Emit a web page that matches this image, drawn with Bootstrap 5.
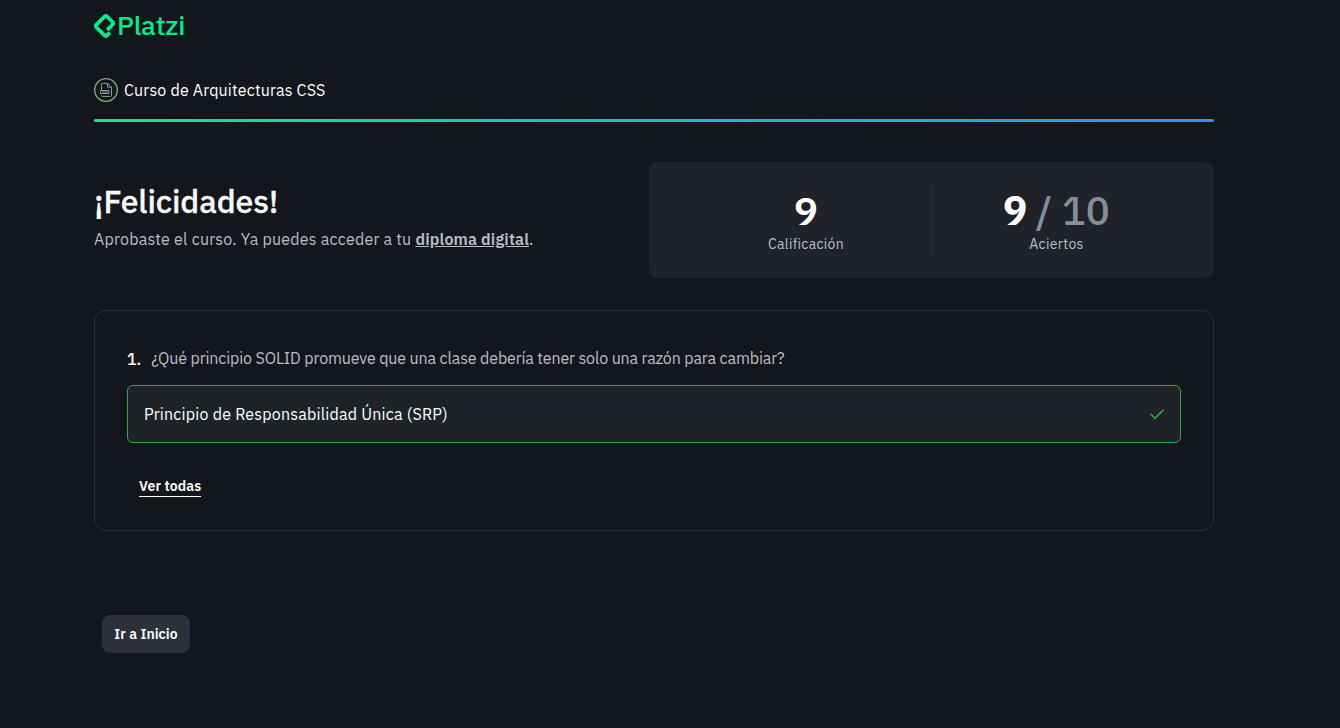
<!DOCTYPE html>
<html lang="es" data-bs-theme="dark">
<head>
<meta charset="utf-8">
<meta name="viewport" content="width=device-width, initial-scale=1">
<title>Platzi</title>
<link href="https://cdn.jsdelivr.net/npm/bootstrap@5.3.0/dist/css/bootstrap.min.css" rel="stylesheet">
<style>
body{background:#13161c;color:#fff;font-family:"IBM Plex Sans",Roboto,"Liberation Sans",sans-serif;font-size:16px;line-height:24px}
.page{width:1120px;margin-left:94px;padding-top:13px}
.brand{height:26px;color:#0ae98a}
.brand-name{font-size:27px;line-height:26px;font-weight:500;letter-spacing:-.25px;margin:-2px 0 0 2px}
.course{margin-top:39px;gap:6px;height:24px}
.course-name{letter-spacing:.17px}
.rule-line{height:3px;margin-top:17px;border-radius:2px;background:linear-gradient(90deg,#0ae98a,#3690f5)}
.summary{margin-top:40px;height:116px}
.congrats{width:555px;padding-top:19px}
.congrats h1{font-size:32px;line-height:40px;font-weight:500;letter-spacing:-.1px;color:#f7f8fa;margin:0;-webkit-text-stroke:.3px currentColor}
.congrats p{color:#babec5;margin:6px 0 0;letter-spacing:.22px}
.congrats a{color:inherit;font-weight:600;letter-spacing:.18px}
.score{background:#1f2229;border-radius:8px;padding:24px 33px 24px 32px}
.score-item{font-size:14px;line-height:20px;color:#babec5;padding-top:2px;letter-spacing:.3px}
.score-num{font-size:40px;line-height:44px;font-weight:600;color:#fff;letter-spacing:0;margin-bottom:2px}
.score-hits{font-weight:700}
.score-total{color:#858d99;font-weight:500;margin-left:-1px}
.score-item + .score-item{border-left:1px solid #2b2f36}
.quiz{margin-top:32px;height:221px;border:1px solid #2b2e35;border-radius:12px;padding:36px 32px 0}
.question{color:#babec5;gap:10px}
.q-num{font-weight:500}
.q-text{letter-spacing:-.13px;margin-top:-1px}
.a-text{letter-spacing:.21px}
.answer{height:58px;margin-top:14px;border:1px solid #33a64c;border-radius:6px;background:#1f2229;padding:0 16px}
.see-all{font-size:14px;line-height:20px;font-weight:600;letter-spacing:.1px;color:#fff;border-bottom:1px solid #fff;margin:33px 0 0 12px}
.home-btn{--bs-btn-bg:#2c3038;--bs-btn-color:#fff;--bs-btn-border-color:#2c3038;width:88px;height:38px;margin:84px 0 0 8px;border-radius:8px;font-size:14px;font-weight:600;letter-spacing:.05px;padding:0}
</style>
</head>
<body>
<main class="page">
  <header class="brand d-flex align-items-center">
    <svg width="21" height="24" viewBox="1.35 0 21.3 24" fill="currentColor"><path d="M10.64 1.127 2.487 9.282a3.842 3.842 0 0 0 0 5.436l8.155 8.155a3.842 3.842 0 0 0 5.436 0l2.719-2.718-2.719-2.718-2.718 2.718L5.204 12l8.155-8.155 5.437 5.437-5.437 5.437 2.718 2.718 5.437-5.437a3.842 3.842 0 0 0 0-5.436L16.077 1.127a3.855 3.855 0 0 0-5.437 0Z"/></svg>
    <span class="brand-name">Platzi</span>
  </header>
  <div class="course d-flex align-items-center">
    <svg width="24" height="24" viewBox="0 0 24 24" fill="none"><circle cx="12" cy="12" r="11.300" stroke="#78b578" stroke-width="1.300"/><path d="M7.500 12.500V6.300c0-.6.3-.9.9-.9h5.100L17.500 9v8.500c0 .6-.3.9-.9.9H8.400c-.5 0-.8-.3-.8-.8M13.500 5.500v3.700H17.300" stroke="#96979f" stroke-width="1"/><path d="M6.500 12.500h8.500v3H6.500z" stroke="#8b9690" stroke-width="1"/><path d="M8 14h5.800" stroke="#6b9a75" stroke-width="1"/></svg>
    <span class="course-name">Curso de Arquitecturas CSS</span>
  </div>
  <div class="rule-line"></div>
  <section class="summary d-flex">
    <div class="congrats">
      <h1>¡Felicidades!</h1>
      <p>Aprobaste el curso. Ya puedes acceder a tu <a href="#">diploma digital</a>.</p>
    </div>
    <div class="score flex-grow-1 d-flex text-center">
      <div class="score-item w-50"><div class="score-num">9</div><span>Calificación</span></div>
      <div class="score-item w-50"><div class="score-num"><span class="score-hits">9</span> <span class="score-total">/ 10</span></div><span>Aciertos</span></div>
    </div>
  </section>
  <section class="quiz">
    <div class="question d-flex"><span class="q-num text-white">1.</span><span class="q-text">¿Qué principio SOLID promueve que una clase debería tener solo una razón para cambiar?</span></div>
    <div class="answer d-flex align-items-center justify-content-between">
      <span class="a-text">Principio de Responsabilidad Única (SRP)</span>
      <svg width="14" height="11" viewBox="0 0 14 11" fill="none" stroke="#33a64c" stroke-width="1.600"><path d="M.5 4.700 5 9.300 13.500.800"/></svg>
    </div>
    <a class="see-all d-inline-block text-decoration-none" href="#">Ver todas</a>
  </section>
  <button class="btn home-btn" type="button">Ir a Inicio</button>
</main>
<script src="https://cdn.jsdelivr.net/npm/bootstrap@5.3.0/dist/js/bootstrap.bundle.min.js"></script>
</body>
</html>
